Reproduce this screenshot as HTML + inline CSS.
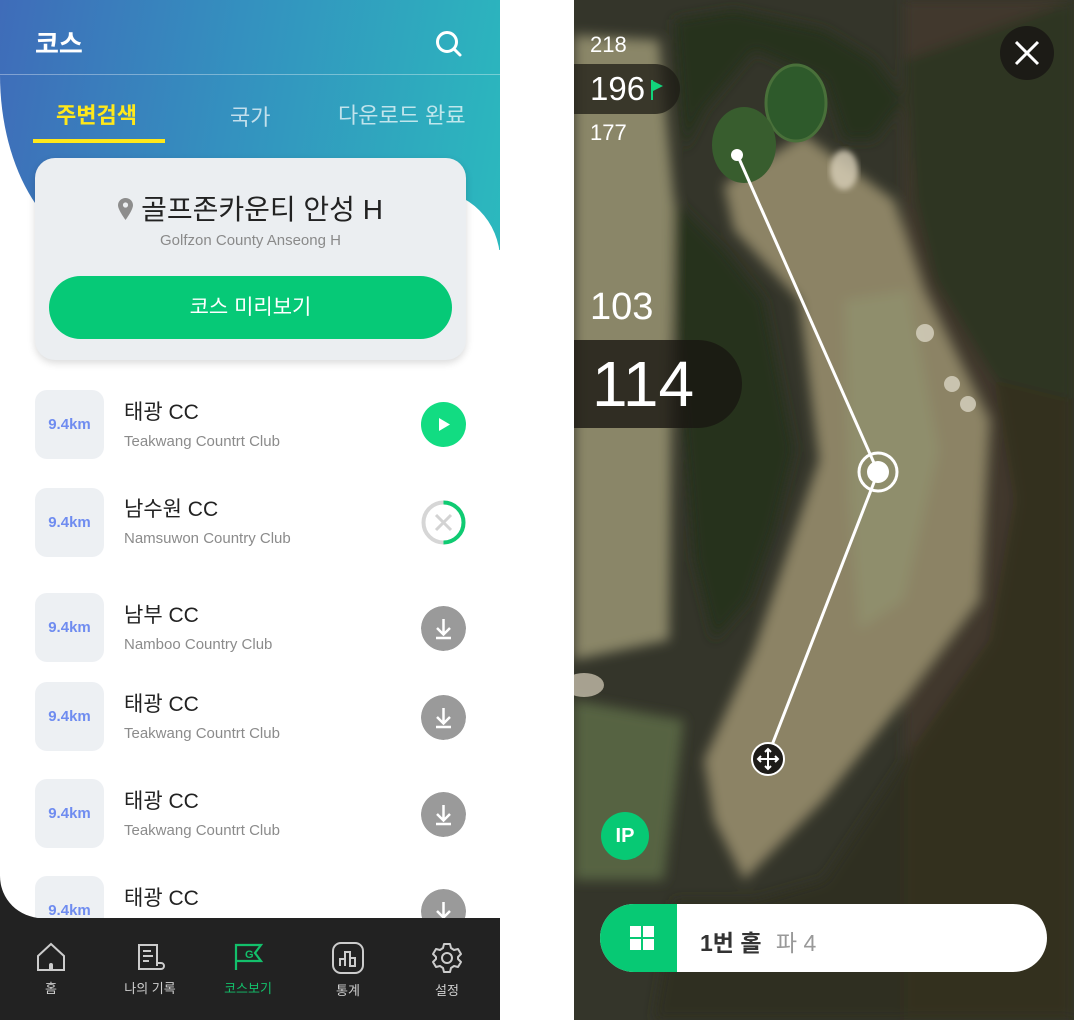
<!DOCTYPE html>
<html><head><meta charset="utf-8"><style>
*{margin:0;padding:0;box-sizing:border-box}
body{width:1074px;height:1020px;background:#fff;position:relative;overflow:hidden;font-family:"Liberation Sans","Noto Sans CJK KR",sans-serif}
.lp{position:absolute;left:0;top:0;width:500px;height:1020px;background:#222;overflow:hidden}
.white{position:absolute;left:0;top:0;width:500px;height:918px;background:#fff;border-bottom-left-radius:42px;overflow:hidden}
.grad{position:absolute;left:0;top:0;width:500px;height:250px;background:linear-gradient(100deg,#3f6cb9 0%,#3490bf 45%,#2bb9be 100%);border-bottom-left-radius:110px 175px}
.wcut{position:absolute;left:40px;top:190px;width:460px;height:200px;background:#fff;border-top-right-radius:70px}
.t{position:absolute;white-space:nowrap}
.tile{position:absolute;left:35px;width:69px;height:69px;border-radius:12px;background:#edf0f3;color:#6f8cf0;font-weight:bold;font-size:15px;text-align:center;line-height:69px}
.nm{position:absolute;left:124px;font-size:21px;color:#222}
.sb{position:absolute;left:124px;font-size:15px;color:#8b8b8b}
.ic{position:absolute;left:421px;width:45px;height:45px;border-radius:50%}
.nav{position:absolute;top:918px;width:100px;text-align:center;font-size:13px;color:#cfcfcf}
.nav svg{display:block;margin:24px auto 6px}
.rp{position:absolute;left:574px;top:0;width:500px;height:1020px;overflow:hidden;background:#34352a}
</style></head><body>
<div class="lp">
 <div class="white">
  <div class="grad"></div>
  <div class="wcut"></div>
  <div class="t" style="left:35px;top:24px;font-size:26px;font-weight:bold;color:#fff">코스</div>
  <svg style="position:absolute;left:434px;top:30px" width="30" height="28" viewBox="0 0 30 28"><circle cx="13" cy="12" r="9.5" fill="none" stroke="#fff" stroke-width="3"/><path d="M20 19l6 6" stroke="#fff" stroke-width="3" stroke-linecap="round"/></svg>
  <div style="position:absolute;left:0;top:74px;width:500px;height:1px;background:rgba(255,255,255,.35)"></div>
  <div class="t" style="left:56px;top:98px;font-size:22px;color:#ffe81a;font-weight:bold">주변검색</div>
  <div style="position:absolute;left:33px;top:139px;width:132px;height:4px;background:#ffe81a"></div>
  <div class="t" style="left:230px;top:100px;font-size:22px;color:rgba(255,255,255,.7)">국가</div>
  <div class="t" style="left:338px;top:98px;font-size:22px;color:rgba(255,255,255,.7)">다운로드 완료</div>
  <div style="position:absolute;left:35px;top:158px;width:431px;height:202px;border-radius:20px;background:#ebeef1;box-shadow:0 3px 8px rgba(0,0,0,.15)">
   <div style="position:absolute;left:0;top:30px;width:100%;text-align:center;font-size:28px;color:#222"><svg width="15" height="22" viewBox="0 0 15 22" style="vertical-align:-1px;margin-right:8px"><path d="M7.5 0C3.4 0 0 3.2 0 7.3 0 12 7.5 22 7.5 22S15 12 15 7.3C15 3.2 11.6 0 7.5 0z" fill="#8d8d8d"/><circle cx="7.5" cy="7" r="2.6" fill="#ebeef1"/></svg>골프존카운티 안성 H</div>
   <div style="position:absolute;left:0;top:74px;width:100%;text-align:center;font-size:15px;color:#8a8a8a">Golfzon County Anseong H</div>
   <div style="position:absolute;left:14px;top:118px;width:403px;height:63px;border-radius:32px;background:#06c977;color:#fff;text-align:center;line-height:63px;font-size:21px">코스 미리보기</div>
  </div>
  <div class="tile" style="top:390px">9.4km</div>
  <div class="nm" style="top:396px">태광 CC</div><div class="sb" style="top:433px">Teakwang Countrt Club</div>
  <div class="ic" style="top:402px;background:#12dc82"><svg width="45" height="45"><path d="M18 16l11 6.5L18 29z" fill="#fff"/></svg></div>
  <div class="tile" style="top:488px">9.4km</div>
  <div class="nm" style="top:493px">남수원 CC</div><div class="sb" style="top:530px">Namsuwon Country Club</div>
  <svg class="ic" style="top:500px" width="45" height="45"><circle cx="22.5" cy="22.5" r="20" fill="none" stroke="#d6d6d6" stroke-width="4"/><path d="M22.5 2.5A20 20 0 0 1 22.5 42.5" fill="none" stroke="#0fcb72" stroke-width="4"/><path d="M15 15l15 15M30 15L15 30" stroke="#d3d3d3" stroke-width="3"/></svg>
  <div class="tile" style="top:593px">9.4km</div>
  <div class="nm" style="top:599px">남부 CC</div><div class="sb" style="top:636px">Namboo Country Club</div>
  <div class="tile" style="top:682px">9.4km</div>
  <div class="nm" style="top:688px">태광 CC</div><div class="sb" style="top:725px">Teakwang Countrt Club</div>
  <div class="tile" style="top:779px">9.4km</div>
  <div class="nm" style="top:785px">태광 CC</div><div class="sb" style="top:822px">Teakwang Countrt Club</div>
  <div class="tile" style="top:876px">9.4km</div>
  <div class="nm" style="top:882px">태광 CC</div>
  <svg class="ic" style="top:606px" width="45" height="45"><circle cx="22.5" cy="22.5" r="22.5" fill="#9a9a9a"/><path d="M22.5 13v15M16 22l6.5 6.5L29 22M15 32h15" stroke="#fff" stroke-width="2.5" fill="none"/></svg>
  <svg class="ic" style="top:695px" width="45" height="45"><circle cx="22.5" cy="22.5" r="22.5" fill="#9a9a9a"/><path d="M22.5 13v15M16 22l6.5 6.5L29 22M15 32h15" stroke="#fff" stroke-width="2.5" fill="none"/></svg>
  <svg class="ic" style="top:792px" width="45" height="45"><circle cx="22.5" cy="22.5" r="22.5" fill="#9a9a9a"/><path d="M22.5 13v15M16 22l6.5 6.5L29 22M15 32h15" stroke="#fff" stroke-width="2.5" fill="none"/></svg>
  <svg class="ic" style="top:889px" width="45" height="45"><circle cx="22.5" cy="22.5" r="22.5" fill="#9a9a9a"/><path d="M22.5 13v15M16 22l6.5 6.5L29 22" stroke="#fff" stroke-width="2.5" fill="none"/></svg>
 </div>
 <div class="nav" style="left:1px"><svg width="30" height="30" viewBox="0 0 30 30"><path d="M2 14L15 2l13 12v14H2z" fill="none" stroke="#ccc" stroke-width="2"/><path d="M13 28v-5a2 2 0 0 1 4 0v5" fill="#ccc"/></svg>홈</div>
 <div class="nav" style="left:100px"><svg width="30" height="30" viewBox="0 0 30 30"><path d="M22 24V3H4v24h22a3 3 0 0 0 0-6h-4" fill="none" stroke="#ccc" stroke-width="2"/><path d="M8 9h8M8 14h10M8 19h6" stroke="#ccc" stroke-width="2"/></svg>나의 기록</div>
 <div class="nav" style="left:198px;color:#13c06b"><svg width="30" height="30" viewBox="0 0 30 30"><path d="M3 28V3h25l-6 8 6 8H4" fill="none" stroke="#13c06b" stroke-width="2.2"/><text x="12" y="16" font-size="11" font-weight="bold" fill="#13c06b" font-family="Liberation Sans">G</text></svg>코스보기</div>
 <div class="nav" style="left:298px"><svg width="32" height="32" viewBox="0 0 32 32"><rect x="1" y="1" width="30" height="30" rx="8" fill="none" stroke="#ccc" stroke-width="2"/><path d="M8 24V17h5v7M13 24V10h5v14M18 24v-8h5v8z" fill="none" stroke="#ccc" stroke-width="2"/></svg>통계</div>
 <div class="nav" style="left:397px"><svg width="32" height="32" viewBox="0 0 32 32"><path d="M13 2h6l1 4 3 2 4-1 3 5-3 3v2l3 3-3 5-4-1-3 2-1 4h-6l-1-4-3-2-4 1-3-5 3-3v-2L2 12l3-5 4 1 3-2z" fill="none" stroke="#ccc" stroke-width="2" stroke-linejoin="round"/><circle cx="16" cy="16" r="5" fill="none" stroke="#ccc" stroke-width="2"/></svg>설정</div>
</div>

<div class="rp">
 <svg width="500" height="1020" viewBox="0 0 500 1020" style="position:absolute;left:0;top:0">
  <defs><filter id="b"><feGaussianBlur stdDeviation="6"/></filter><filter id="b2"><feGaussianBlur stdDeviation="3"/></filter></defs>
  <rect width="500" height="1020" fill="#34352a"/>
  <g filter="url(#b)">
   <rect x="330" y="0" width="170" height="1020" fill="#4a3b2e" opacity=".55"/>
   <path d="M0 35 L85 40 L100 200 L95 640 L0 660z" fill="#8a8668"/>
   <path d="M150 185 L230 135 L320 200 L350 290 L415 420 L405 600 L330 700 L250 800 L170 880 L140 820 L130 760 L180 650 L245 460 L225 300 L160 230z" fill="#8c8365"/>
   <path d="M270 300 L335 290 L365 450 L330 600 L285 630 L275 500z" fill="#8f8e6c"/>
   <path d="M0 700 L110 720 L90 880 L0 880z" fill="#566443"/>
   <path d="M100 200 L150 250 L190 300 L220 450 L200 530 L175 600 L140 640 L120 560 L110 440 L100 320z" fill="#27331f"/>
   <path d="M420 380 L440 500 L415 640 L330 760 L250 880 L180 900 L100 900 L80 1020 L500 1020 L500 350z" fill="#30301f" opacity=".85"/>
   <path d="M100 20 L160 10 L250 30 L300 60 L330 100 L300 140 L270 140 L250 80 L180 50 L130 110 L110 150z" fill="#28321f"/>
   <path d="M330 60 L500 0 L500 400 L420 380 L360 280 L340 200z" fill="#2f3423"/>
  </g>
  <ellipse cx="222" cy="103" rx="30" ry="38" fill="#2e5a2b" stroke="#49703a" stroke-width="3"/>
  <ellipse cx="170" cy="145" rx="32" ry="38" fill="#385d2e"/>
  <ellipse cx="270" cy="170" rx="14" ry="20" fill="#d8cfb8" opacity=".8" filter="url(#b2)"/>
  <circle cx="351" cy="333" r="9" fill="#d8d3c2" opacity=".8"/>
  <circle cx="378" cy="384" r="8" fill="#d8d3c2" opacity=".8"/>
  <circle cx="394" cy="404" r="8" fill="#d8d3c2" opacity=".8"/>
  <ellipse cx="10" cy="685" rx="20" ry="12" fill="#d8d0bc" opacity=".7"/>
  <path d="M163 154 L304 472 L193 758" stroke="#fff" stroke-width="3" fill="none"/>
  <circle cx="163" cy="155" r="6" fill="#fff"/>
  <circle cx="304" cy="472" r="19" fill="none" stroke="#fff" stroke-width="3"/>
  <circle cx="304" cy="472" r="11" fill="#fff"/>
 </svg>
 <div class="t" style="left:16px;top:32px;font-size:22px;color:#fff">218</div>
 <div style="position:absolute;left:0;top:64px;width:106px;height:50px;background:rgba(30,28,22,.75);border-radius:0 25px 25px 0"></div>
 <div class="t" style="left:16px;top:70px;font-size:33px;color:#fff">196</div>
 <svg style="position:absolute;left:77px;top:80px" width="14" height="20"><path d="M1 0v20" stroke="#12d47c" stroke-width="2"/><path d="M2 1l10 5-10 5z" fill="#12d47c"/></svg>
 <div class="t" style="left:16px;top:120px;font-size:22px;color:#fff">177</div>
 <div class="t" style="left:16px;top:286px;font-size:38px;color:#fff">103</div>
 <div style="position:absolute;left:0;top:340px;width:168px;height:88px;background:rgba(25,22,18,.8);border-radius:0 44px 44px 0"></div>
 <div class="t" style="left:18px;top:347px;font-size:64px;color:#fff">114</div>
 <div style="position:absolute;left:426px;top:26px;width:54px;height:54px;border-radius:50%;background:rgba(25,22,20,.85)"><svg width="54" height="54"><path d="M16 16l22 22M38 16L16 38" stroke="#fff" stroke-width="3"/></svg></div>
 <div style="position:absolute;left:177px;top:742px;width:34px;height:34px;border-radius:50%;background:#1d1b18;border:2px solid #fff"><svg width="30" height="30"><path d="M15 5v20M5 15h20M12 8l3-3 3 3M12 22l3 3 3-3M8 12l-3 3 3 3M22 12l3 3-3 3" stroke="#fff" stroke-width="2" fill="none"/></svg></div>
 <div style="position:absolute;left:27px;top:812px;width:48px;height:48px;border-radius:50%;background:#07c974;color:#fff;font-weight:bold;font-size:20px;text-align:center;line-height:48px">IP</div>
 <div style="position:absolute;left:26px;top:904px;width:447px;height:68px;border-radius:34px;background:#fff;overflow:hidden">
  <div style="position:absolute;left:0;top:0;width:77px;height:68px;background:#07c974"><svg style="position:absolute;left:30px;top:22px" width="25" height="25"><rect x="0" y="0" width="11" height="11" fill="#fff"/><rect x="13" y="0" width="11" height="11" fill="#fff"/><rect x="0" y="13" width="11" height="11" fill="#fff"/><rect x="13" y="13" width="11" height="11" fill="#fff"/></svg></div>
  <div class="t" style="left:100px;top:20px;font-size:23px;color:#333;font-weight:bold">1번 홀 <span style="color:#999;font-weight:normal;margin-left:8px">파 4</span></div>
 </div>
</div>
</body></html>
